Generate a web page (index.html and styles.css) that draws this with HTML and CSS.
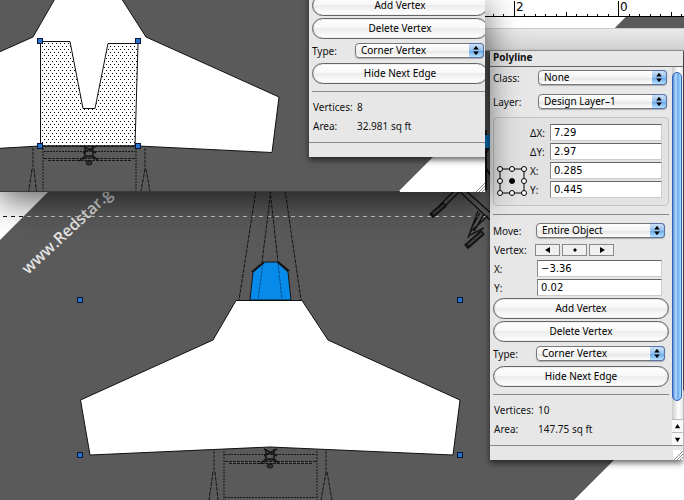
FILE: index.html
```html
<!DOCTYPE html>
<html lang="en">
<head>
<meta charset="utf-8">
<title>Polyline</title>
<link rel="stylesheet" href="styles.css">
</head>
<body>
<main class="desktop">
  <svg class="drawing" viewBox="0 0 684 500" preserveAspectRatio="xMinYMin slice">
    <defs>
      <g id="gear" fill="none" stroke="#161616">
        <path d="M214 451V472M326 451V472" stroke-dasharray="3 1"/>
        <path d="M224 451V500M317 451V500" stroke-dasharray="2 1"/>
        <path d="M213 472L209 500M215 472L218 500M326 472L321 500M327 472L332 500" stroke-dasharray="4 1"/>
        <path d="M225 454.500H316M225 497.500H316" stroke-dasharray="2 1"/>
        <path d="M225 461.500H316M229 463.500H312" stroke-dasharray="3 1"/>
        <path d="M264 449L277 456M277 449L264 456M260 464L266 459H274L280 464M266 449V459M274 449V459" stroke-width="1.500"/>
        <ellipse cx="270" cy="462" rx="6" ry="2"/>
        <ellipse cx="270" cy="466" rx="3" ry="2" fill="#333"/>
      </g>
    </defs>
    <rect width="684" height="500" fill="#fff"/>
    <path d="M240 0H643L684 -41V390L574 500H0V240Z" fill="#5a5a5a"/>
    <path d="M0 216.500H24" stroke="#111" stroke-dasharray="4 4" stroke-dashoffset="-3"/>
    <path d="M27 216.500H490" stroke="#c4c4c4" stroke-dasharray="4 4"/>
    <text class="watermark" transform="translate(28 275) rotate(-43)">www.Redstar.g</text>
    <g fill="none" stroke="#151515">
      <path d="M256 190L239 300M285 190L301 300M271 190L262 262M270 190L278 262" stroke-dasharray="4 1"/>
      <path d="M250 300L253 272L265 262H277L288 272L291 300Z" fill="#078bea"/>
      <path d="M263 263L258 300M278 263L282 300" stroke-dasharray="3 1" stroke="#064c86"/>
      <path d="M252 272L264 262M278 262L289 271" stroke-width="2"/>
    </g>
    <use href="#gear"/>
    <path d="M236 300.500H302L328 340L460 400L453 455L270 447L90 455L80.500 400L213 340Z" fill="#fff" stroke="#111"/>
    <g fill="none" stroke="#151515">
      <path d="M461 190L443 208M458 187L440 205M458 190L490 220M464 189L494 216M480 213L471 229M484 214L474 231M488 216L470 232M478 211L468 238M468 236L484 228" stroke-width="1.500"/>
      <path d="M431 216L445 204M466 247L483 232" stroke-width="6"/>
      <path d="M433 214L444 205M468 245L482 233" stroke="#444" stroke-width="2"/>
      <path d="M486 130V190M485 155L490 145M484 165L491 176" stroke-width="2"/>
      <path d="M487 135V148" stroke="#087fd2" stroke-width="6"/>
    </g>
    <g fill="#2873c8" stroke="#05183c">
      <rect x="77.500" y="297.500" width="5" height="5"/>
      <rect x="457.500" y="297.500" width="5" height="5"/>
      <rect x="77.500" y="452.500" width="5" height="5"/>
      <rect x="457.500" y="452.500" width="5" height="5"/>
    </g>
    <path d="M485 17H626L615 28H485Z" fill="#fff"/>
    <path d="M626 17H684V28H615Z" fill="#5a5a5a"/>
    <rect x="485" width="199" height="16" fill="#fff"/>
    <path d="M485 16.500H684M514.500 1V16M566.500 12V16M618.500 1V16M671.500 12V16M493.500 14V16M503.500 14V16M524.500 14V16M535.500 14V16M545.500 14V16M556.500 14V16M576.500 14V16M587.500 14V16M597.500 14V16M608.500 14V16M629.500 14V16M639.500 14V16M650.500 14V16M660.500 14V16M681.500 14V16" stroke="#000"/>
    <text class="ruler-number" x="516" y="11">2</text>
    <text class="ruler-number" x="620" y="11">0</text>
  </svg>

  <div class="dock-bar"></div>

  <section class="palette main-palette">
    <h1 class="palette-title">Polyline</h1>
    <div class="palette-body">
      <form class="content">
        <div class="row class-row">
          <label for="class">Class:</label>
          <span class="popup"><select id="class"><option>None</option></select><svg class="popup-arrows" viewBox="0 0 14 14"><path d="M4 6L7 2L10 6ZM4 8L7 12L10 8Z"/></svg></span>
        </div>
        <div class="row class-row layer-row">
          <label for="layer">Layer:</label>
          <span class="popup"><select id="layer"><option>Design Layer–1</option></select><svg class="popup-arrows" viewBox="0 0 14 14"><path d="M4 6L7 2L10 6ZM4 8L7 12L10 8Z"/></svg></span>
        </div>
        <div class="group">
          <svg class="anchor" viewBox="0 0 30 30" fill="#fff" stroke="#000">
            <rect x="3" y="3" width="24" height="24" fill="none"/>
            <circle cx="3" cy="3" r="2.500"/><circle cx="15" cy="3" r="2.500"/><circle cx="27" cy="3" r="2.500"/>
            <circle cx="3" cy="15" r="2.500"/><circle cx="27" cy="15" r="2.500"/>
            <circle cx="3" cy="27" r="2.500"/><circle cx="15" cy="27" r="2.500"/><circle cx="27" cy="27" r="2.500"/>
            <circle cx="15" cy="15" r="2.500" fill="#000"/>
          </svg>
          <div class="group-fields">
            <label for="dx">ΔX:</label><input id="dx" value="7.29">
            <label for="dy">ΔY:</label><input id="dy" value="2.97">
            <label for="x">X:</label><input id="x" value="0.285">
            <label for="y">Y:</label><input id="y" value="0.445">
          </div>
        </div>
        <hr>
        <div class="row move-row">
          <label for="move">Move:</label>
          <span class="popup"><select id="move"><option>Entire Object</option></select><svg class="popup-arrows" viewBox="0 0 14 14"><path d="M4 6L7 2L10 6ZM4 8L7 12L10 8Z"/></svg></span>
        </div>
        <div class="row vertex-row">
          <span class="label">Vertex:</span>
          <span class="stepper">
            <button type="button" aria-label="Previous vertex"><svg viewBox="0 0 8 8"><path d="M1 4L6 1V7Z"/></svg></button>
            <button type="button" aria-label="Current vertex"><svg viewBox="0 0 8 8"><path d="M4 2L6 4L4 6L2 4Z"/></svg></button>
            <button type="button" aria-label="Next vertex"><svg viewBox="0 0 8 8"><path d="M7 4L2 1V7Z"/></svg></button>
          </span>
        </div>
        <div class="vertex-fields">
          <label for="vx">X:</label><input id="vx" value="−3.36">
          <label for="vy">Y:</label><input id="vy" value="0.02">
        </div>
        <button class="pill" type="button">Add Vertex</button>
        <button class="pill" type="button">Delete Vertex</button>
        <div class="row type-row">
          <label for="type">Type:</label>
          <span class="popup"><select id="type"><option>Corner Vertex</option></select><svg class="popup-arrows" viewBox="0 0 14 14"><path d="M4 6L7 2L10 6ZM4 8L7 12L10 8Z"/></svg></span>
        </div>
        <button class="pill" type="button">Hide Next Edge</button>
        <hr class="stats-rule">
        <dl class="stats"><dt>Vertices:</dt><dd>10</dd><dt>Area:</dt><dd>147.75 sq ft</dd></dl>
      </form>
      <div class="scrollbar">
        <div class="thumb"></div>
        <button type="button" aria-label="Scroll up"><svg viewBox="0 0 8 8"><path d="M4 1L7 6H1Z"/></svg></button>
        <button type="button" aria-label="Scroll down"><svg viewBox="0 0 8 8"><path d="M4 7L7 2H1Z"/></svg></button>
      </div>
    </div>
    <footer class="palette-foot"><svg class="grip" viewBox="0 0 10 10"><path d="M1 10L10 1M4 10L10 4M7 10L10 7"/></svg></footer>
  </section>

  <section class="inset">
    <svg class="drawing" viewBox="0 0 485 192" preserveAspectRatio="xMinYMin slice">
      <defs>
        <pattern id="dots" width="4" height="6" patternUnits="userSpaceOnUse">
          <path d="M0 1h1v1h-1zM2 4h1v1h-1z"/>
        </pattern>
      </defs>
      <rect width="485" height="192" fill="#5a5a5a"/>
      <path d="M485 105V192H398Z" fill="#fff"/>
      <use href="#gear" transform="translate(-181 -303)"/>
      <path d="M60 -10L33 37L-12 57V149L40 146H138L272 152.500L279 97L146 37L116 -10Z" fill="#fff" stroke="#111"/>
      <path d="M40.500 41.500H70L83 108.500H95L108 43.500H138L135 146H40.500Z" fill="url(#dots)" stroke="#111"/>
      <g fill="#2873c8" stroke="#05183c">
        <rect x="37.500" y="38.500" width="5" height="5"/>
        <rect x="135.500" y="38.500" width="5" height="5"/>
        <rect x="37.500" y="143.500" width="5" height="5"/>
        <rect x="135.500" y="143.500" width="5" height="5"/>
      </g>
      <path d="M0 191.500H485" stroke="#3a3a3a"/>
      <path d="M400 191.500H485" stroke="#fff"/>
    </svg>
    <section class="palette inset-palette">
      <form class="content">
        <button class="pill" type="button">Add Vertex</button>
        <button class="pill" type="button">Delete Vertex</button>
        <div class="row type-row">
          <label for="inset-type">Type:</label>
          <span class="popup"><select id="inset-type"><option>Corner Vertex</option></select><svg class="popup-arrows" viewBox="0 0 14 14"><path d="M4 6L7 2L10 6ZM4 8L7 12L10 8Z"/></svg></span>
        </div>
        <button class="pill" type="button">Hide Next Edge</button>
        <hr class="stats-rule">
        <dl class="stats"><dt>Vertices:</dt><dd>8</dd><dt>Area:</dt><dd>32.981 sq ft</dd></dl>
      </form>
      <footer class="palette-foot"></footer>
    </section>
    <svg class="grip inset-grip" viewBox="0 0 10 10"><path d="M1 10L10 1M4 10L10 4M7 10L10 7"/></svg>
  </section>
</main>
</body>
</html>
```
FILE: styles.css
```css
* {
  box-sizing: border-box;
}

body {
  margin: 0;
  background: #fff;
  color: #111;
  font: 10px/14px "Noto Sans", "Open Sans", sans-serif;
}

.desktop {
  position: relative;
  height: 100vh;
  overflow: hidden;
}

.drawing {
  display: block;
  width: 100%;
  height: 100%;
}

.watermark {
  font: 600 16px "Open Sans", sans-serif;
  fill: #e4e4e4;
}

.ruler-number {
  font: 12px "DejaVu Sans", sans-serif;
}

.dock-bar {
  position: absolute;
  top: 28px;
  left: 485px;
  right: 0;
  height: 23px;
  background: linear-gradient(#e9e9e9, #d2d2d2);
  border-top: 1px solid #ccc;
  border-bottom: 1px solid #999;
}

.palette {
  background: #e7e7e7;
  box-shadow: 0 3px 6px rgba(0, 0, 0, .6);
}

.main-palette {
  position: absolute;
  top: 51px;
  left: 490px;
  right: 1px;
}

.palette-title {
  height: 16px;
  margin: 0;
  padding: 0 3px;
  border-bottom: 1px solid #666;
  font: bold 10px/13px "Noto Sans", "Open Sans", sans-serif;
}

.palette-body {
  display: flex;
}

.content {
  flex: 1;
  display: flex;
  flex-direction: column;
  padding: 3px 3px 9px;
}

.row {
  display: flex;
  align-items: center;
  height: 15px;
}

.row label,
.row .label {
  flex: 0 0 43px;
}

.row.class-row label {
  flex-basis: 45px;
}

.class-row {
  margin-right: 2px;
}

.layer-row {
  margin-top: 9px;
}

.popup {
  position: relative;
  flex: 1;
  height: 15px;
}

select,
input,
button {
  margin: 0;
  color: #000;
  font: inherit;
}

select {
  display: block;
  width: 100%;
  height: 15px;
  padding: 0 20px 0 5px;
  appearance: none;
  border: 1px solid #777;
  border-radius: 4px;
  background: linear-gradient(#fff, #f3f3f3 50%, #e5e5e5 55%, #fff);
  line-height: 13px;
  box-shadow: 0 1px 1px rgba(0, 0, 0, .25);
}

.popup-arrows {
  position: absolute;
  top: 0;
  right: 0;
  width: 15px;
  height: 15px;
  border: 1px solid #5775a8;
  border-left: 0;
  border-radius: 0 4px 4px 0;
  background: linear-gradient(#cfe2f8, #92bfee 50%, #6aa8e6 55%, #b9e2ff);
  pointer-events: none;
}

.group {
  display: flex;
  align-items: flex-end;
  margin-top: 8px;
  padding: 6px 6px 7px 3px;
  border: 1px solid #c4c4c4;
  border-radius: 4px;
  background: #e2e2e2;
}

.anchor {
  flex: 0 0 30px;
  height: 30px;
  margin-bottom: 2px;
}

.group-fields,
.vertex-fields {
  flex: 1;
  display: grid;
  grid-template-columns: 20px 1fr;
  row-gap: 2px;
  align-items: center;
  margin-left: 3px;
}

.vertex-fields {
  flex: none;
  grid-template-columns: 43px 1fr;
  margin: 4px 7px 2px 1px;
}

input {
  width: 100%;
  min-width: 0;
  height: 17px;
  padding: 0 3px;
  border: 1px solid #ccc;
  border-top-color: #666;
  border-left-color: #888;
  border-radius: 0;
  background: #fff;
  font-family: "DejaVu Sans", sans-serif;
}

hr {
  width: 100%;
  height: 1px;
  margin: 8px 0;
  border: 0;
  background: #888;
}

.move-row,
.type-row {
  margin-right: 4px;
}

.vertex-row {
  height: 12px;
  margin: 6px 0 0 1px;
}

.vertex-row .label {
  flex-basis: 41px;
}

.stepper {
  display: flex;
  gap: 2px;
}

.stepper button {
  display: flex;
  align-items: center;
  justify-content: center;
  width: 25px;
  height: 12px;
  padding: 0;
  border: 1px solid #888;
  background: #f0f0f0;
}

.stepper svg {
  width: 8px;
  height: 8px;
}

.pill {
  height: 21px;
  padding: 0;
  border: 1px solid #666;
  border-radius: 11px;
  background: linear-gradient(#fff, #f8f8f8 45%, #ececec 50%, #fff);
  line-height: 17px;
  box-shadow: inset 0 0 1px #555;
}

.pill + .pill {
  margin-top: 2px;
}

.type-row {
  margin-top: 4px;
  margin-bottom: 5px;
}

.stats-rule {
  margin: 7px 0 8px;
}

.stats {
  display: grid;
  grid-template-columns: 44px 1fr;
  row-gap: 5px;
  margin: 0 0 0 1px;
}

.stats dd {
  margin: 0;
}

.scrollbar {
  flex: 0 0 11px;
  display: flex;
  flex-direction: column;
  background: linear-gradient(90deg, #ccc, #fff 60%, #e5e5e5);
}

.thumb {
  flex: 1;
  margin: 5px 1px 18px 0;
  border: 1px solid #3463b8;
  border-radius: 5px;
  background: linear-gradient(90deg, #4d87d8, #b8dcff 35%, #6caaf0 60%, #a9e0ff);
}

.scrollbar button {
  display: flex;
  align-items: center;
  justify-content: center;
  height: 13px;
  padding: 0;
  border: 0;
  border-top: 1px solid #bbb;
  background: #f8f8f8;
}

.scrollbar svg {
  width: 7px;
  height: 7px;
}

.palette-foot {
  display: flex;
  justify-content: flex-end;
  align-items: flex-end;
  height: 15px;
  border-top: 1px solid #888;
}

.grip {
  width: 10px;
  height: 10px;
  background: #fff;
  stroke: #888;
}

.inset {
  position: absolute;
  top: 0;
  left: 0;
  width: 485px;
  height: 192px;
  overflow: hidden;
  box-shadow: 0 8px 32px rgba(0, 0, 0, .65);
}

.inset-palette {
  position: absolute;
  left: 309px;
  bottom: 35px;
  width: 182px;
}

.inset-grip {
  position: absolute;
  right: 0;
  bottom: 0;
}
```
